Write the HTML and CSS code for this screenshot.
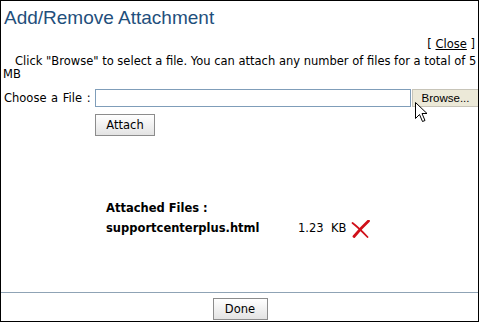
FILE: index.html
```html
<!DOCTYPE html>
<html>
<head>
<meta charset="utf-8">
<link rel="stylesheet" href="styles.css">
</head>
<body>
<div class="frame">
  <h1 class="title">Add/Remove Attachment</h1>
  <div class="close-row">[ <a href="#" class="close">Close</a> ]</div>
  <p class="info">Click "Browse" to select a file. You can attach any number of files for a total of 5 MB</p>
  <div class="form">
    <label class="lbl">Choose a File :</label>
    <div class="file-row">
      <span class="file-input"></span>
      <span class="browse">Browse...</span>
    </div>
    <span></span>
    <div><button class="btn attach">Attach</button></div>
  </div>
  <div class="attached">
    <div class="att-title">Attached Files :</div>
    <div class="att-row">
      <span class="fname">supportcenterplus.html</span>
      <span class="fsize">1.23&nbsp;&nbsp;KB</span>
      <svg class="del" width="20" height="18" viewBox="0 0 20 18">
        <path d="M17.5 1 Q10 8 3 16.5" stroke="#d0101a" stroke-width="2.8" stroke-linecap="round" fill="none"/>
        <path d="M1.5 3 Q8 8 16.5 17" stroke="#d0101a" stroke-width="1.8" stroke-linecap="round" fill="none"/>
      </svg>
    </div>
  </div>
  <div class="footer"><button class="btn done">Done</button></div>
  <svg class="cursor" width="14" height="22" viewBox="0 0 14 22">
    <path d="M0.5 0.5 L0.5 16.5 L4.5 12.5 L7.5 19.5 L10 18.5 L7 11.5 L12 11.5 Z" fill="#fff" stroke="#000" stroke-width="1" stroke-linejoin="miter"/>
  </svg>
</div>
</body>
</html>
```
FILE: styles.css
```css
html, body { margin: 0; padding: 0; background: #fff; }
body { width: 480px; height: 322px; overflow: hidden; }
.frame {
  position: relative;
  box-sizing: border-box;
  width: 479px;
  height: 322px;
  border: 1px solid #000;
  display: flex;
  flex-direction: column;
  font-family: "DejaVu Sans", Verdana, sans-serif;
  font-size: 11.5px;
  color: #000;
}
.title {
  margin: 0;
  padding: 6px 0 0 3px;
  font-family: "Liberation Sans", Arial, sans-serif;
  font-weight: normal;
  font-size: 19px;
  line-height: 22px;
  color: #1f4f7c;
}
.close-row {
  margin-top: 9px;
  text-align: right;
  padding-right: 3px;
  line-height: 13px;
}
.close { color: #000; text-decoration: underline; }
.info {
  margin: 4px 0 0 0;
  padding: 0 1px 0 2px;
  text-indent: 12px;
  line-height: 13px;
}
.form {
  margin-top: 8px;
  display: grid;
  grid-template-columns: 94px 1fr;
  row-gap: 7px;
  align-items: center;
}
.lbl { padding-left: 3px; white-space: nowrap; word-spacing: 1px; }
.file-row { display: flex; align-items: center; }
.file-input {
  box-sizing: border-box;
  width: 316px;
  height: 18px;
  border: 1px solid #7f9db9;
  background: #fff;
}
.browse {
  box-sizing: border-box;
  width: 66px;
  height: 18px;
  margin-left: 1px;
  border: 1px solid #c7c4b8;
  border-right: none;
  background: #ece9d8;
  font-family: "Liberation Sans", Arial, sans-serif;
  font-size: 11.5px;
  line-height: 16px;
  text-align: center;
}
.btn {
  box-sizing: border-box;
  border: 1px solid #8c8c8c;
  background: linear-gradient(#ffffff, #e3e3e3);
  font-family: "DejaVu Sans", Verdana, sans-serif;
  font-size: 11.5px;
  color: #000;
  padding: 0;
}
.attach { width: 60px; height: 22px; }
.attached {
  margin-top: 63px;
  padding-left: 105px;
  font-weight: bold;
  line-height: 19px;
}
.att-row { display: flex; align-items: center; }
.fname { width: 192px; }
.fsize { font-weight: normal; width: 53px; }
.del { margin-top: 2px; }
.footer {
  margin-top: auto;
  border-top: 1px solid #8fa3b5;
  height: 29px;
  display: flex;
  justify-content: center;
  align-items: flex-start;
  padding-top: 5px;
  box-sizing: border-box;
}
.done { width: 55px; height: 22px; margin-left: 1px; }
.cursor { position: absolute; left: 414px; top: 101px; }
```
